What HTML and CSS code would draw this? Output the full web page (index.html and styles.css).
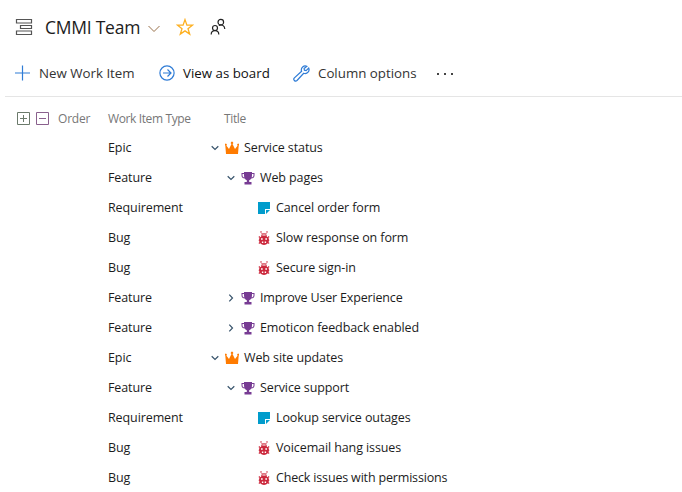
FILE: index.html
```html
<!DOCTYPE html>
<html lang="en">
<head>
<meta charset="utf-8">
<title>CMMI Team backlog</title>
<link rel="stylesheet" href="styles.css">
</head>
<body>
<svg class="sprite" aria-hidden="true">
  <symbol id="crown" viewBox="0 0 14 14"><path fill="#ff7b00" d="M1 13 .3 4.500a1 1 0 1 1 1 0L4 8 6.500 3a1.200 1.200 0 1 1 1 0L10 8l2.700-3.500a1 1 0 1 1 1 0L13 13z"/></symbol>
  <symbol id="trophy" viewBox="0 0 14 14"><path fill="#773b93" d="M3 1h8v1h2.500v2.500C13.500 6.500 12 7.500 10.300 7.500 9.600 8.700 8.600 9 8.200 9.200V11h2.300v2.500h-7V11h2.300V9.200C5.400 9 4.400 8.700 3.700 7.500 2 7.500.5 6.500.5 4.500V2H3zM1.500 3v1.500c0 1.100.7 1.700 1.800 2C3 5.500 3 4 3 3zM11 3c0 1 0 2.500-.3 3.500 1.100-.3 1.800-.9 1.800-2V3z"/></symbol>
  <symbol id="note" viewBox="0 0 14 14"><path fill="#009ccc" d="M1 1h12v7H8v5H1z"/><path fill="#009ccc" d="M9 9h4l-4 4z"/></symbol>
  <symbol id="bug" viewBox="0 0 14 14"><path fill="none" stroke="#cc293d" stroke-width=".9" d="M4 0v1.500L5.500 3M10 0v1.500L8.500 3M2.300 5v1.800h2M11.700 5v1.800h-2M1.700 9.300h10.600M2.300 13v-1.500h2M11.700 13v-1.500h-2"/><path fill="#cc293d" d="M4.200 5.500C4 1.200 10 1.200 9.800 5.500c1.400.8 2.200 2 2.200 3.500 0 3-2 4.900-5 4.900S2 12 2 9c0-1.500.8-2.700 2.200-3.500z"/><path fill="#fff" d="M5.300 3.600h3.400v1H5.300zM4 7.200h1.700v1.600H4zM8.300 7.200H10v1.600H8.300zM4.900 10.500h1.400V12H4.900zM7.700 10.500h1.400V12H7.700z"/></symbol>
  <symbol id="down" viewBox="0 0 8 8"><path fill="none" stroke="#37536b" stroke-width="1.200" d="m.7 2.300 3.300 3.200 3.300-3.200"/></symbol>
  <symbol id="right" viewBox="0 0 8 8"><path fill="none" stroke="#37536b" stroke-width="1.200" d="m2.300.7 3.200 3.300-3.200 3.300"/></symbol>
</svg>

<header class="title-bar">
  <svg class="backlog-icon" viewBox="0 0 18 18"><path fill="none" stroke="#555" stroke-width="1.200" d="M1.500 1.500h15v3.500h-15zM5.500 7.500h11v3h-11zM1.500 13h15v3.500h-15z"/></svg>
  <h1>CMMI Team</h1>
  <svg class="team-chevron" viewBox="0 0 12 8"><path fill="none" stroke="#98704a" d="m.5 1 5.500 5.500L11.500 1"/></svg>
  <svg class="star" viewBox="0 0 18 18"><path fill="none" stroke="#fdb022" stroke-width="1.300" d="m9 1.600 1.900 5.600h5.500l-4.400 3.500 1.700 5.400L9 12.900l-4.700 3.200 1.700-5.400-4.400-3.500h5.500z"/></svg>
  <svg class="people" viewBox="0 0 16 18"><g fill="none" stroke="#222" stroke-width="1.200"><circle cx="10.800" cy="4.200" r="2.800"/><circle cx="5" cy="10" r="2.500"/><path d="M1.200 16.500c0-5.200 7.600-5.200 7.600 0M8.800 7.600C11 6 14.800 7.200 14.800 11"/></g></svg>
</header>

<nav class="toolbar">
  <span class="command new-item"><svg viewBox="0 0 16 16"><path stroke="#2f7cd6" stroke-width="1.200" d="M8.500.5v15M1 8h15"/></svg><span>New Work Item</span></span>
  <span class="command view-board"><svg viewBox="0 0 16 16"><g fill="none" stroke="#2f7cd6" stroke-width="1.200"><circle cx="8" cy="8" r="7.100"/><path d="M4 8h8M8.500 4.500 12 8l-3.500 3.500"/></g></svg><span>View as board</span></span>
  <span class="command options"><svg viewBox="0 0 17 17"><path fill="none" stroke="#2f7cd6" stroke-width="1.200" d="M13.800 1.300C11 0 7.300 2.600 8.600 6.300L1.400 12.900c-1.700 1.700.8 4.300 2.600 2.600l6.700-7.200c3.700 1.200 6.300-2.400 5-5.200l-2.600 2.500-1.700-.4-.3-1.600z"/></svg><span>Column options</span></span>
  <span class="more"><i></i><i></i><i></i></span>
</nav>

<main class="backlog">
  <div class="row head">
    <div class="order"><svg viewBox="0 0 13 13"><path fill="none" stroke="#6b7a6b" d="M.5.5h12v12H.5zM3 6.500h7M6.500 3v7"/></svg><svg viewBox="0 0 13 13"><path fill="none" stroke="#8a608d" d="M.5.5h12v12H.5zM3 6.500h7"/></svg><span>Order</span></div>
    <div class="type">Work Item Type</div><div class="label">Title</div>
  </div>
  <div class="row"><div class="type">Epic</div><div class="item"><svg class="toggle"><use href="#down"/></svg><svg class="kind"><use href="#crown"/></svg><span>Service status</span></div></div>
  <div class="row"><div class="type">Feature</div><div class="item child"><svg class="toggle"><use href="#down"/></svg><svg class="kind"><use href="#trophy"/></svg><span>Web pages</span></div></div>
  <div class="row"><div class="type">Requirement</div><div class="item leaf"><svg class="kind"><use href="#note"/></svg><span>Cancel order form</span></div></div>
  <div class="row"><div class="type">Bug</div><div class="item leaf"><svg class="kind"><use href="#bug"/></svg><span>Slow response on form</span></div></div>
  <div class="row"><div class="type">Bug</div><div class="item leaf"><svg class="kind"><use href="#bug"/></svg><span>Secure sign-in</span></div></div>
  <div class="row"><div class="type">Feature</div><div class="item child"><svg class="toggle"><use href="#right"/></svg><svg class="kind"><use href="#trophy"/></svg><span class="tight">Improve User Experience</span></div></div>
  <div class="row"><div class="type">Feature</div><div class="item child"><svg class="toggle"><use href="#right"/></svg><svg class="kind"><use href="#trophy"/></svg><span>Emoticon feedback enabled</span></div></div>
  <div class="row"><div class="type">Epic</div><div class="item"><svg class="toggle"><use href="#down"/></svg><svg class="kind"><use href="#crown"/></svg><span>Web site updates</span></div></div>
  <div class="row"><div class="type">Feature</div><div class="item child"><svg class="toggle"><use href="#down"/></svg><svg class="kind"><use href="#trophy"/></svg><span>Service support</span></div></div>
  <div class="row"><div class="type">Requirement</div><div class="item leaf"><svg class="kind"><use href="#note"/></svg><span>Lookup service outages</span></div></div>
  <div class="row"><div class="type">Bug</div><div class="item leaf"><svg class="kind"><use href="#bug"/></svg><span>Voicemail hang issues</span></div></div>
  <div class="row"><div class="type">Bug</div><div class="item leaf"><svg class="kind"><use href="#bug"/></svg><span class="tight">Check issues with permissions</span></div></div>
</main>
</body>
</html>
```
FILE: styles.css
```css
* { box-sizing: border-box; }
body {
  margin: 0;
  height: 492px;
  overflow: hidden;
  background: #fff;
  color: #1c1c1c;
  font: 12.5px/30px "Open Sans", "Noto Sans", sans-serif;
}
svg { display: block; flex: none; }
.sprite { display: none; }
.title-bar { display: flex; align-items: center; height: 50px; padding: 4px 0 0 15px; }
.title-bar h1 { width: 95px; margin: 0 8px 0 12px; font-size: 17.5px; font-weight: 400; letter-spacing: -0.25px; white-space: nowrap; }
.backlog-icon { width: 18px; height: 18px; }
.team-chevron { width: 12px; height: 8px; margin-top: 4px; }
.star { width: 18px; height: 18px; margin-left: 16px; }
.people { width: 16px; height: 18px; margin-left: 16px; }
.toolbar { display: flex; align-items: center; height: 47px; margin-left: 5px; padding-left: 9px; border-bottom: 1px solid #e5e5e5; font-size: 13.300px; color: #333; white-space: nowrap; }
.command { display: flex; align-items: center; gap: 9px; }
.command svg { width: 16px; height: 16px; }
.new-item { width: 145px; }
.view-board { width: 134px; gap: 8px; color: #111; }
.options { width: 144px; gap: 8px; }
.options svg { width: 17px; height: 17px; }
.more { display: flex; gap: 5px; padding-top: 2px; }
.more i { width: 2px; height: 2px; background: #444; }
.backlog { padding-top: 7px; }
.row { display: grid; grid-template-columns: 108px 103px 1fr; height: 30px; letter-spacing: -0.1px; white-space: nowrap; }
.head { height: 29px; line-height: 29px; font-size: 12px; letter-spacing: -0.38px; color: #777; }
.head .order span { letter-spacing: -0.2px; }
.type { grid-column: 2; }
.label { padding-left: 13px; }
.order { display: flex; align-items: center; gap: 6px; padding-left: 17px; }
.order svg { width: 13px; height: 13px; margin-bottom: 1px; }
.order span { margin-left: 3px; }
.item { display: flex; align-items: center; }
.child { padding-left: 16px; }
.leaf { padding-left: 46px; }
.tight { letter-spacing: -0.17px; }
.toggle { width: 8px; height: 8px; }
.kind { width: 14px; height: 14px; margin: 0 5px 0 6px; }
.leaf .kind { margin-left: 0; }
```
